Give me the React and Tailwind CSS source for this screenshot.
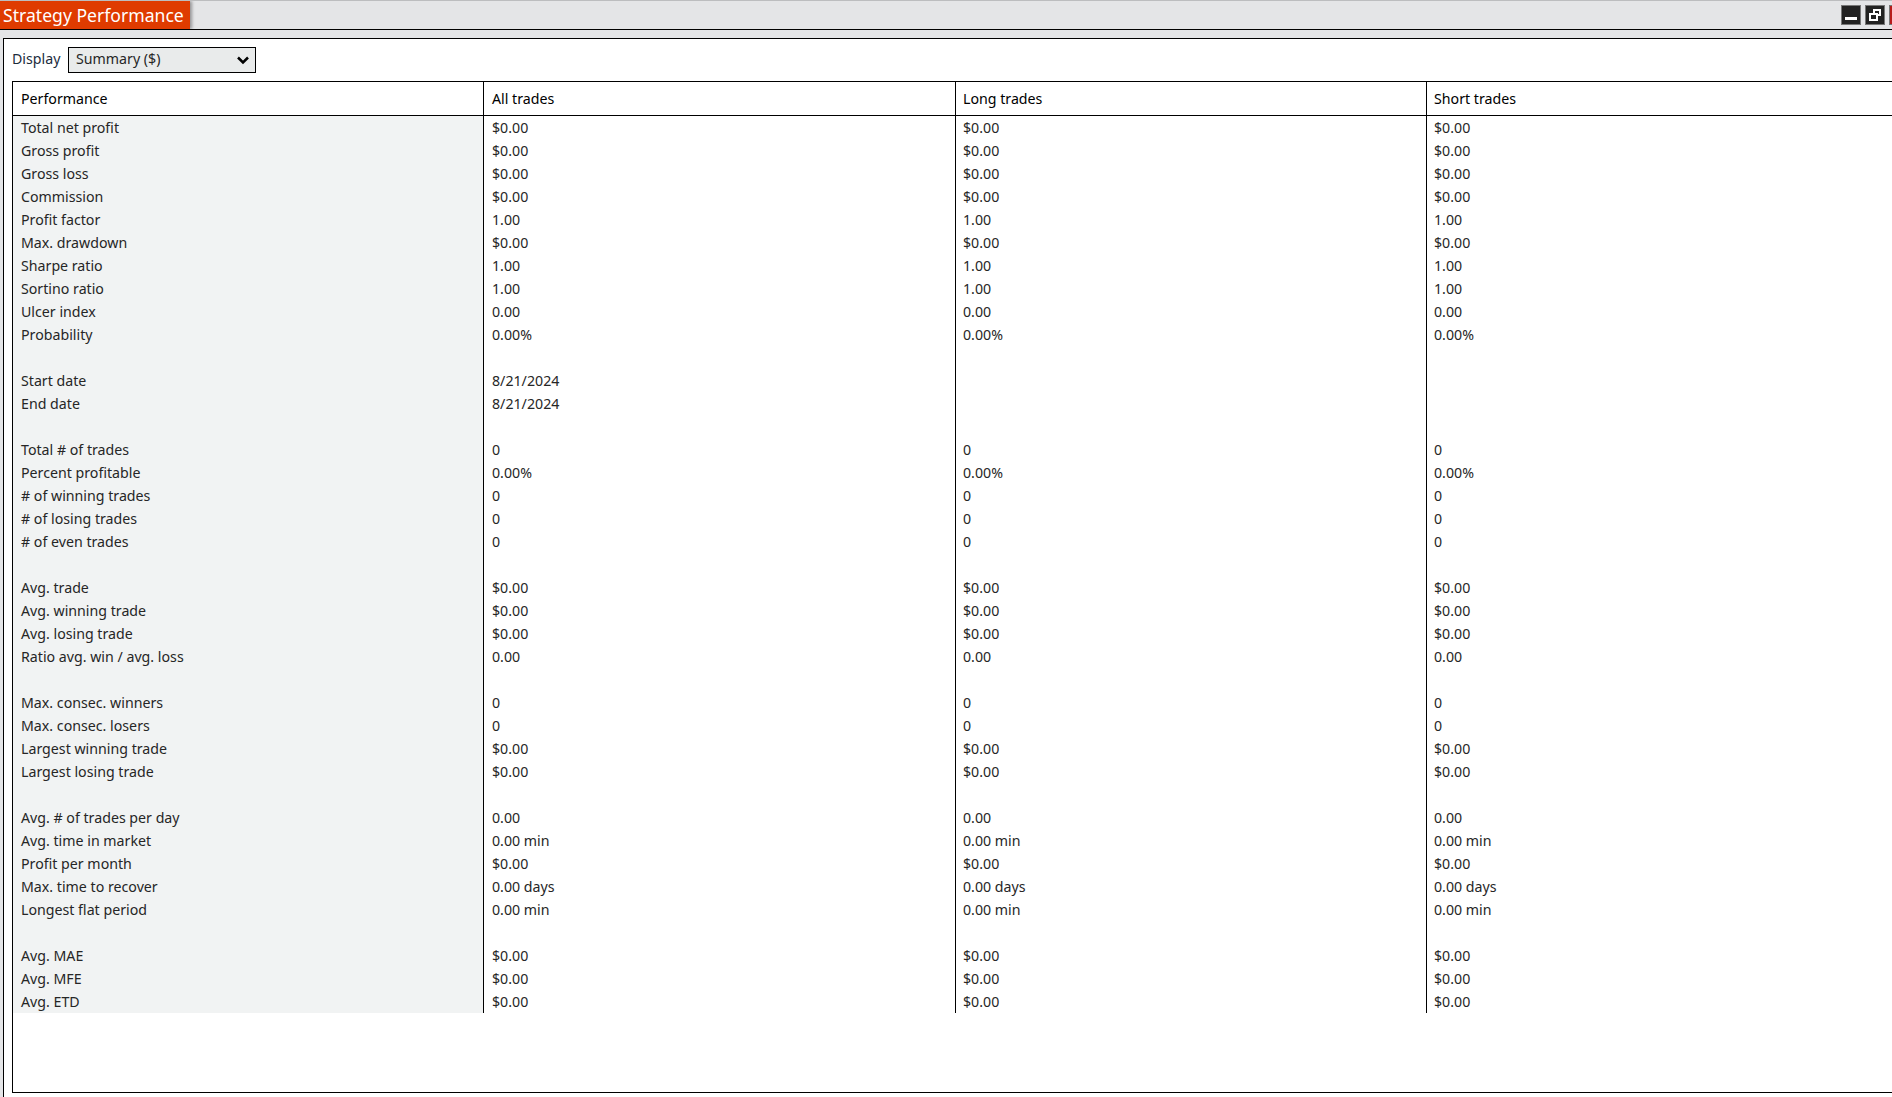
const rows = [
  ["Total net profit", "$0.00", "$0.00", "$0.00"],
  ["Gross profit", "$0.00", "$0.00", "$0.00"],
  ["Gross loss", "$0.00", "$0.00", "$0.00"],
  ["Commission", "$0.00", "$0.00", "$0.00"],
  ["Profit factor", "1.00", "1.00", "1.00"],
  ["Max. drawdown", "$0.00", "$0.00", "$0.00"],
  ["Sharpe ratio", "1.00", "1.00", "1.00"],
  ["Sortino ratio", "1.00", "1.00", "1.00"],
  ["Ulcer index", "0.00", "0.00", "0.00"],
  ["Probability", "0.00%", "0.00%", "0.00%"],
  null,
  ["Start date", "8/21/2024", "", ""],
  ["End date", "8/21/2024", "", ""],
  null,
  ["Total # of trades", "0", "0", "0"],
  ["Percent profitable", "0.00%", "0.00%", "0.00%"],
  ["# of winning trades", "0", "0", "0"],
  ["# of losing trades", "0", "0", "0"],
  ["# of even trades", "0", "0", "0"],
  null,
  ["Avg. trade", "$0.00", "$0.00", "$0.00"],
  ["Avg. winning trade", "$0.00", "$0.00", "$0.00"],
  ["Avg. losing trade", "$0.00", "$0.00", "$0.00"],
  ["Ratio avg. win / avg. loss", "0.00", "0.00", "0.00"],
  null,
  ["Max. consec. winners", "0", "0", "0"],
  ["Max. consec. losers", "0", "0", "0"],
  ["Largest winning trade", "$0.00", "$0.00", "$0.00"],
  ["Largest losing trade", "$0.00", "$0.00", "$0.00"],
  null,
  ["Avg. # of trades per day", "0.00", "0.00", "0.00"],
  ["Avg. time in market", "0.00 min", "0.00 min", "0.00 min"],
  ["Profit per month", "$0.00", "$0.00", "$0.00"],
  ["Max. time to recover", "0.00 days", "0.00 days", "0.00 days"],
  ["Longest flat period", "0.00 min", "0.00 min", "0.00 min"],
  null,
  ["Avg. MAE", "$0.00", "$0.00", "$0.00"],
  ["Avg. MFE", "$0.00", "$0.00", "$0.00"],
  ["Avg. ETD", "$0.00", "$0.00", "$0.00"],
];

function Row({ cells }) {
  const [label, a, b, c] = cells || ["", "", "", ""];
  return (
    <div className="flex h-[23px] leading-[23px] text-[#262626]">
      <div className="w-[471px] shrink-0 border-r border-black bg-[#f1f3f3] pl-2 h-full">{label}</div>
      <div className="w-[472px] shrink-0 border-r border-black pl-2 h-full">{a}</div>
      <div className="w-[471px] shrink-0 border-r border-black pl-[7px] h-full">{b}</div>
      <div className="pl-[7px] h-full">{c}</div>
    </div>
  );
}

export default function App() {
  return (
    <div className="w-[1892px] h-[1097px] overflow-hidden bg-white text-[14.2px] font-['Noto_Sans','Open_Sans',sans-serif] text-black">
      <div className="h-[30px] flex justify-between overflow-hidden bg-[#e4e5e7] border-t border-t-[#bcbdbf] border-b border-b-black">
        <div className="w-[190px] h-[28px] bg-[#df3b00] text-white text-[17.6px] leading-[28px] pl-[3px] shadow-[2px_0_3px_rgba(0,0,0,0.35)]">
          Strategy Performance
        </div>
        <div className="flex items-start gap-1 pt-1 -mr-[17px]">
          <div className="w-5 h-5 bg-[#222222] border border-[#777777] flex items-end justify-center pb-[4px]">
            <div className="w-3 h-[3px] bg-white" />
          </div>
          <div className="w-5 h-5 bg-[#222222] border border-[#777777] flex items-center justify-center">
            <svg width="14" height="14" viewBox="0 0 14 14" fill="none" stroke="white" strokeWidth="2">
              <rect x="6" y="2" width="6" height="5" />
              <rect x="2" y="6" width="7" height="6" fill="#222222" />
            </svg>
          </div>
          <div className="w-5 h-5 bg-[#b71c1c] border border-[#777777]" />
        </div>
      </div>
      <div className="h-[1067px] pt-[8px] pl-[3px] bg-[#e4e5e7]">
        <div className="w-[1900px] h-[1059px] bg-white border-t border-l border-black pl-[8px] pt-[8px]">
          <div className="flex items-center h-[26px] mb-[8px]">
            <span className="w-[56px] pb-[2px] text-[#1c2c3c]">Display</span>
            <div className="w-[188px] h-[26px] bg-[#e9ebeb] border border-black flex items-center justify-between pl-[7px] pr-[5px] text-[#262626]">
              <span className="pb-[2px]">Summary ($)</span>
              <svg width="14" height="14" viewBox="0 0 14 14" fill="none" stroke="black" strokeWidth="2.5">
                <path d="M2 4.5 L7 9.5 L12 4.5" />
              </svg>
            </div>
          </div>
          <div className="w-[1888px] h-[1012px] border-t border-l border-b border-black">
            <div className="flex h-[34px] leading-[34px] border-b border-black">
              <div className="w-[471px] shrink-0 border-r border-black pl-2">Performance</div>
              <div className="w-[472px] shrink-0 border-r border-black pl-2">All trades</div>
              <div className="w-[471px] shrink-0 border-r border-black pl-[7px]">Long trades</div>
              <div className="pl-[7px]">Short trades</div>
            </div>
            {rows.map((cells, i) => (
              <Row key={i} cells={cells} />
            ))}
          </div>
        </div>
      </div>
    </div>
  );
}
